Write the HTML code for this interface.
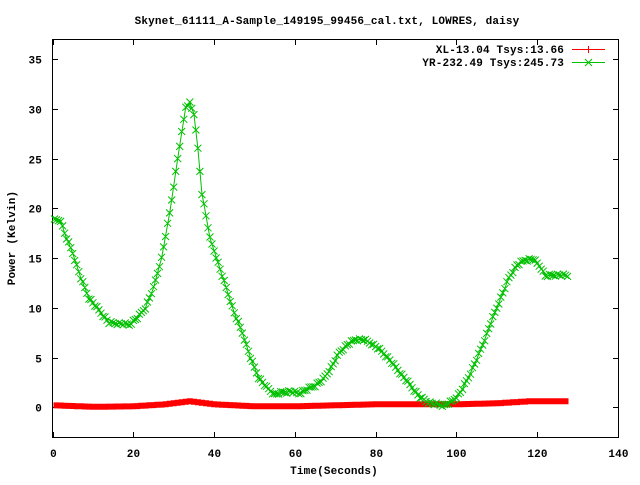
<!DOCTYPE html>
<html><head><meta charset="utf-8"><style>
body{margin:0;background:#fff;width:640px;height:480px;overflow:hidden}
text{font-family:"Liberation Mono",monospace;font-weight:bold;font-size:11px;fill:#000;letter-spacing:0.15px}
</style></head><body>
<svg id="s" width="640" height="480" xmlns="http://www.w3.org/2000/svg">
<rect x="0" y="0" width="640" height="480" fill="#fff"/>
<text x="327" y="24" text-anchor="middle">Skynet_61111_A-Sample_149195_99456_cal.txt, LOWRES, daisy</text>
<rect x="52.5" y="39.5" width="566" height="398" fill="none" stroke="#000" stroke-width="1"/>
<g id="ticks" stroke="#000" stroke-width="1"></g>
<g id="labels"></g>
<text x="334" y="474" text-anchor="middle">Time(Seconds)</text>
<text transform="translate(15,238) rotate(-90)" text-anchor="middle">Power (Kelvin)</text>
<text x="564" y="53" text-anchor="end">XL-13.04 Tsys:13.66</text>
<text x="564" y="66" text-anchor="end">YR-232.49 Tsys:245.73</text>
<line x1="572" y1="49.5" x2="605" y2="49.5" stroke="#f00"/>
<line x1="588.5" y1="46" x2="588.5" y2="53" stroke="#f00"/>
<line x1="572" y1="62.5" x2="605" y2="62.5" stroke="#00c000"/>
<path d="M585 59l7 7M592 59l-7 7" stroke="#00c000"/>
<g id="red"></g><g id="green"></g>
</svg>
<script>
var ns="http://www.w3.org/2000/svg";
function X(v){return 52.5+v*4.039;}
function Y(v){return 407.3-v*9.95;}
function el(t,a,p){var e=document.createElementNS(ns,t);for(var k in a)e.setAttribute(k,a[k]);document.getElementById(p).appendChild(e);return e;}
for(var i=0;i<=140;i+=20){var x=Math.round(X(i))+0.5;el('line',{x1:x,y1:437,x2:x,y2:432},'ticks');el('line',{x1:x,y1:40,x2:x,y2:45},'ticks');
var t=el('text',{x:x,y:457,'text-anchor':'middle'},'labels');t.textContent=i;}
for(var v=0;v<=35;v+=5){var y=Math.round(Y(v))+0.5;el('line',{x1:53,y1:y,x2:58,y2:y},'ticks');el('line',{x1:618,y1:y,x2:613,y2:y},'ticks');
var t=el('text',{x:42,y:y+4,'text-anchor':'end'},'labels');t.textContent=v;}
var g=[[0.5,18.8],[2,18.8],[3,17.5],[5,15.5],[7,13],[9,11],[12,9.5],[14,8.5],[17,8.4],[19,8.3],[21,9],[23,10],[25,12],[27,15],[29,19.5],[31,25],[33,30.2],[34,30.6],[35,29.5],[36,26],[37,21.5],[39,17],[41,14.5],[43,12],[45,9.5],[47,7.5],[49,5],[51,3],[53,2],[55,1.3],[57,1.5],[59,1.6],[61,1.4],[63,1.8],[65,2.2],[67,2.8],[69,4],[71,5.5],[73,6.3],[75,6.8],[77,6.8],[79,6.4],[81,5.8],[83,5],[85,4],[87,3],[89,2],[91,1],[93,0.5],[95,0.3],[97,0.2],[99,0.6],[101,1.5],[103,3],[105,4.8],[107,6.8],[109,9],[111,11],[113,13],[115,14.3],[117,14.8],[119,14.9],[121,14],[122,13.2],[124,13.3],[126,13.3],[127.5,13.2]];
var r=[[0.5,0.2],[10,0.05],[20,0.1],[28,0.3],[34,0.6],[40,0.3],[50,0.1],[60,0.1],[70,0.2],[80,0.3],[90,0.3],[100,0.3],[110,0.4],[118,0.6],[127.5,0.6]];
function interp(d,x){for(var i=0;i<d.length-1;i++){if(x<=d[i+1][0]){var f=(x-d[i][0])/(d[i+1][0]-d[i][0]);return d[i][1]+f*(d[i+1][1]-d[i][1]);}}return d[d.length-1][1];}
var pr="",pg="",mr="",mg="",n=0;
for(var s=0.5;s<=127.5;s+=0.5){var xr=X(s),yr=Y(interp(r,s)),yg=Y(interp(g,s));
var j=((n*37)%7-3)*0.4;n++;
pr+=(s==0.5?"M":"L")+xr.toFixed(1)+" "+yr.toFixed(1);pg+=(s==0.5?"M":"L")+xr.toFixed(1)+" "+yg.toFixed(1);
if(n%2==0)mr+="M"+(xr-3).toFixed(1)+" "+yr.toFixed(1)+"h6";
var yy=yg+j;
mg+="M"+(xr-3.5).toFixed(1)+" "+(yy-3.5).toFixed(1)+"l7 7M"+(xr+3.5).toFixed(1)+" "+(yy-3.5).toFixed(1)+"l-7 7";}
el('path',{d:pr,stroke:'#f00',fill:'none','stroke-width':3},'red');
el('path',{d:mr,stroke:'#f00',fill:'none','stroke-width':6},'red');
el('path',{d:pg,stroke:'#00c000',fill:'none'},'green');
el('path',{d:mg,stroke:'#00c000',fill:'none'},'green');
</script>
</body></html>
